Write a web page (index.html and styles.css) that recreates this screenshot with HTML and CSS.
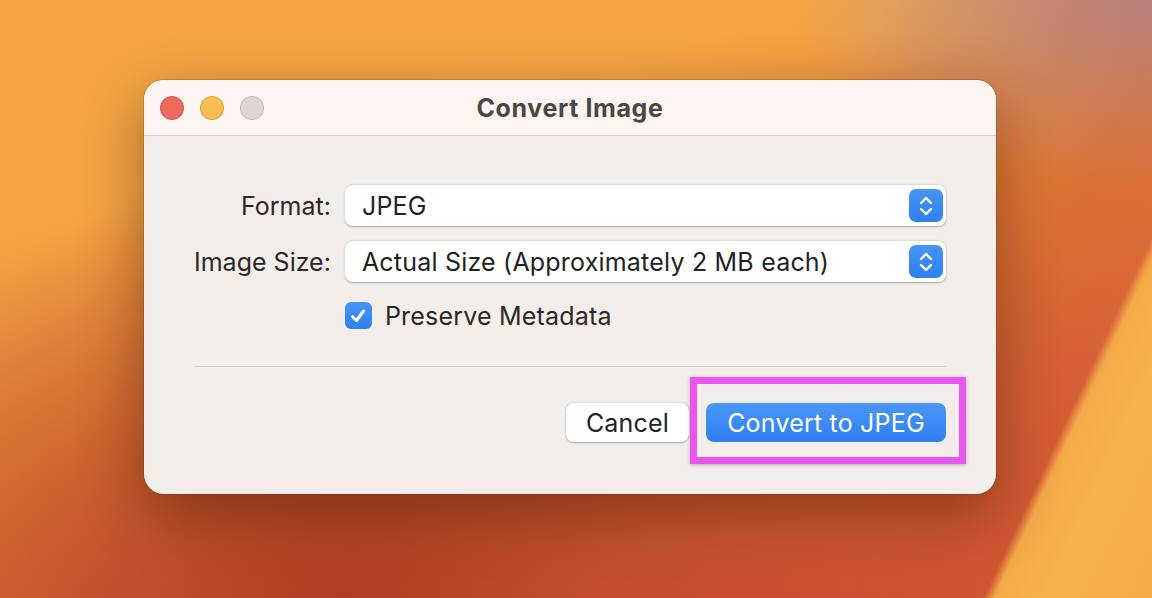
FILE: index.html
```html
<!DOCTYPE html>
<html lang="en">
<head>
  <meta charset="UTF-8" />
  <title>Convert Image</title>
  <link rel="stylesheet" href="styles.css">
</head>
<body>
  <div class="desktop">
    <div class="window">
      <div class="titlebar">
        <div class="lights">
          <span class="light red"></span>
          <span class="light yellow"></span>
          <span class="light gray"></span>
        </div>
        <h1>Convert Image</h1>
      </div>
      <div class="content">
        <div class="form">
          <label>Format:</label>
          <div class="select">
            <span>JPEG</span>
            <span class="stepper">
              <svg width="18" height="24" viewBox="0 0 18 24"><path d="M4 9 L9 4 L14 9 M4 15 L9 20 L14 15" fill="none" stroke="#fff" stroke-width="2.4" stroke-linecap="round" stroke-linejoin="round"/></svg>
            </span>
          </div>
          <label>Image Size:</label>
          <div class="select">
            <span>Actual Size (Approximately 2 MB each)</span>
            <span class="stepper">
              <svg width="18" height="24" viewBox="0 0 18 24"><path d="M4 9 L9 4 L14 9 M4 15 L9 20 L14 15" fill="none" stroke="#fff" stroke-width="2.4" stroke-linecap="round" stroke-linejoin="round"/></svg>
            </span>
          </div>
          <span></span>
          <div class="check-row">
            <span class="checkbox">
              <svg width="20" height="20" viewBox="0 0 20 20"><path d="M4.5 10.5 L8.5 14.5 L15.5 5" fill="none" stroke="#fff" stroke-width="3" stroke-linecap="round" stroke-linejoin="round"/></svg>
            </span>
            <span>Preserve Metadata</span>
          </div>
        </div>
        <hr>
        <div class="buttons">
          <button class="btn cancel">Cancel</button>
          <button class="btn primary">Convert to JPEG</button>
          <span class="highlight"></span>
        </div>
      </div>
    </div>
  </div>
</body>
</html>
```

FILE: styles.css
```css
html, body {
  margin: 0;
  height: 100%;
}

body {
  font-family: Inter, "Liberation Sans", Arial, sans-serif;
  overflow: hidden;
  background:
    linear-gradient(115deg, rgba(243,166,72,0) 0%, rgba(243,166,72,0) 88.2%, #f4aa4a 89%, #f7b44c 93%, #f5aa46 100%),
    linear-gradient(115deg, rgba(180,62,36,0) 62%, rgba(190,70,40,0.3) 82%, rgba(205,80,50,0.35) 88.5%, rgba(205,80,50,0) 89%),
    radial-gradient(ellipse at 100% 0%, #b4929a 0%, rgba(200,140,120,0) 22%),
    radial-gradient(ellipse at 30% 100%, #b03e24 0%, rgba(170,60,34,0) 50%),
    linear-gradient(165deg, #f3a643 0%, #f4a644 25%, #e8863a 50%, #dc6a38 72%, #cf5330 100%);
}

.desktop {
  padding: 80px 0 0 144px;
}

.window {
  width: 852px;
  height: 414px;
  border-radius: 20px;
  background: #f3eeea;
  box-shadow: 0 20px 60px rgba(60, 20, 0, 0.45), 0 0 0 1px rgba(0, 0, 0, 0.12);
  overflow: hidden;
  display: flex;
  flex-direction: column;
}

.titlebar {
  height: 55px;
  background: #fcf5f1;
  border-bottom: 1px solid #d6cfcb;
  display: flex;
  align-items: center;
  position: relative;
}

.lights {
  display: flex;
  gap: 16px;
  padding-left: 16px;
}

.light {
  width: 22px;
  height: 22px;
  border-radius: 50%;
  border: 1px solid rgba(0, 0, 0, 0.12);
}

.light.red { background: #ee6a5e; }
.light.yellow { background: #f5be4f; }
.light.gray { background: #ddd6d2; }

.titlebar h1 {
  position: absolute;
  left: 0;
  right: 0;
  margin: 0;
  text-align: center;
  font-size: 25px;
  font-weight: 700;
  letter-spacing: 0.6px;
  color: #4b4644;
}

.content {
  padding: 49px 50px 0 50px;
}

.form {
  display: grid;
  grid-template-columns: auto 1fr;
  column-gap: 14px;
  row-gap: 15px;
  align-items: center;
}

.form label {
  text-align: right;
  white-space: nowrap;
  font-size: 25px;
  color: #2a2828;
}

.select {
  height: 41px;
  background: #fff;
  border-radius: 8px;
  box-shadow: 0 0.5px 2px rgba(0, 0, 0, 0.3);
  display: flex;
  align-items: center;
  justify-content: space-between;
  padding: 0 3px 0 17px;
  font-size: 25px;
  letter-spacing: 0.2px;
  color: #222;
}

.stepper {
  width: 34px;
  height: 33px;
  border-radius: 7px;
  background: linear-gradient(#4795f7, #2f7ff0);
  display: flex;
  align-items: center;
  justify-content: center;
}

.check-row {
  display: flex;
  align-items: center;
  gap: 13px;
  font-size: 25px;
  letter-spacing: 0.2px;
  color: #2a2828;
  margin-top: 5px;
  height: 27px;
}

.checkbox {
  width: 27px;
  height: 27px;
  border-radius: 6px;
  background: linear-gradient(#4895f7, #2e7ef0);
  display: flex;
  align-items: center;
  justify-content: center;
}

.content hr {
  margin: 37px 0 0 0;
  border: none;
  border-top: 1px solid #d9d3cf;
}

.buttons {
  display: flex;
  justify-content: flex-end;
  gap: 17px;
  margin-top: 36px;
  position: relative;
}

.btn {
  height: 39px;
  border: none;
  border-radius: 8px;
  font-family: Inter, "Liberation Sans", Arial, sans-serif;
  font-size: 25px;
  letter-spacing: 0.2px;
  padding: 0;
}

.btn.cancel {
  width: 123px;
  background: #fff;
  color: #222;
  box-shadow: 0 0.5px 2px rgba(0, 0, 0, 0.3);
}

.btn.primary {
  width: 240px;
  background: linear-gradient(#4b97f8, #2f7ef0);
  color: #fff;
}

.highlight {
  position: absolute;
  right: -20px;
  top: -26px;
  width: 262px;
  height: 73px;
  border: 7px solid #e856ee;
  box-shadow: 0 1px 4px rgba(0, 0, 0, 0.25);
}
```
